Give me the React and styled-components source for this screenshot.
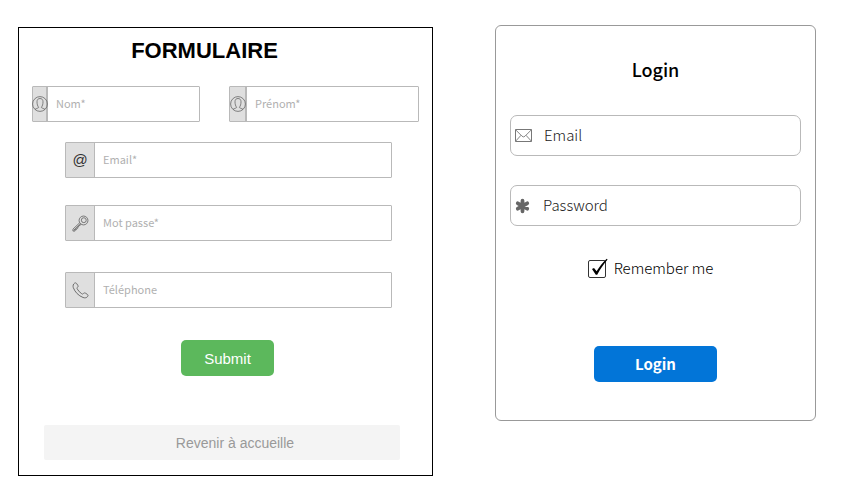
import React from "react";
import styled, { createGlobalStyle } from "styled-components";

const humanist = `"Noto Sans CJK SC", "Noto Sans", sans-serif`;
const grotesque = `"Liberation Sans", Arial, sans-serif`;

const GlobalStyle = createGlobalStyle`
  *, *::before, *::after { box-sizing: border-box; }
  body { margin: 0; background: #fff; color: #000; font-family: ${humanist}; }
  input, button { font: inherit; margin: 0; }
`;

const Page = styled.main`
  display: grid;
  grid-template-columns: 415fr 321fr;
  align-items: start;
  gap: 62px;
  padding: 25px 33px 19px 18px;
`;

const RegisterPanel = styled.form`
  display: flex;
  flex-direction: column;
  min-width: 0;
  margin-top: 2px;
  padding-bottom: 15px;
  border: 1px solid #000;
`;

const RegisterTitle = styled.h1`
  margin: 10px 42px 0 0;
  font: bold 22px/26px ${grotesque};
  text-align: center;
`;

const NameRow = styled.div`
  display: grid;
  grid-template-columns: 168fr 190fr;
  gap: 29px;
  padding: 0 13px;
  margin: 22px 0 20px;
`;

const FieldList = styled.div`
  display: flex;
  flex-direction: column;
  gap: 27px;
  padding: 0 40px 0 46px;

  > :last-child { margin-top: 4px; }
`;

const Field = styled.label`
  display: flex;
  min-width: 0;
  height: 36px;
  border: 1px solid #b9b9b9;
  border-radius: 1px;
`;

const Addon = styled.span`
  display: flex;
  flex: none;
  align-items: center;
  justify-content: center;
  width: ${({ $width }) => $width}px;
  background: #dfdfdf;
  border-right: ${({ $edge }) => $edge || 1}px solid #b9b9b9;
  color: #333;
  font: 15px/34px ${grotesque};

  svg { flex: none; }
`;

const FieldInput = styled.input`
  flex: 1;
  min-width: 0;
  padding: 0 8px 2px;
  border: 0;
  background: #fff;
  font-size: 11px;
  &::placeholder { color: #b0b0b0; opacity: 1; }
`;

const SubmitButton = styled.button`
  align-self: center;
  width: 93px;
  height: 36px;
  margin: 32px 0 49px 4px;
  padding: 2px 0 0;
  border: 0;
  border-radius: 5px;
  background: #5cb85c;
  color: #fff;
  font: 15px/34px ${grotesque};
`;

const BackButton = styled.button`
  height: 35px;
  margin: 0 32px 0 25px;
  padding: 1px 0 0 26px;
  border: 0;
  border-radius: 2px;
  background: #f4f4f4;
  color: #999;
  font: 14px/34px ${grotesque};
`;

const LoginPanel = styled.form`
  display: flex;
  flex-direction: column;
  min-width: 0;
  padding: 28px 14px 38px;
  border: 1px solid #999;
  border-radius: 6px;
`;

const LoginTitle = styled.h2`
  margin: 0 0 31px;
  font-size: 18px;
  font-weight: 500;
  line-height: 30px;
  text-align: center;
`;

const LoginField = styled.label`
  display: flex;
  align-items: center;
  height: 41px;
  margin-bottom: 29px;
  padding-left: 4px;
  border: 1px solid #b9b9b9;
  border-radius: 7px;
  color: #666;

  svg { flex: none; }
`;

const LoginInput = styled.input`
  flex: 1;
  min-width: 0;
  height: 100%;
  padding: 0 12px 2px;
  border: 0;
  background: transparent;
  font-size: 15px;
  font-weight: 300;
  &::placeholder { color: #222; opacity: 1; }
`;

const Remember = styled.label`
  display: flex;
  align-items: center;
  align-self: center;
  gap: 8px;
  height: 24px;
  margin: 2px 10px 65px 0;
  color: #000;
  font-size: 15px;
  font-weight: 300;
  line-height: 22px;
`;

const RememberText = styled.span`
  padding-bottom: 2px;
`;

const CheckWrap = styled.span`
  position: relative;
  display: block;
  width: 18px;
  height: 18px;

  svg {
    position: absolute;
    left: 0;
    bottom: 0;
    pointer-events: none;
  }
  input:not(:checked) + svg { display: none; }
`;

const CheckInput = styled.input`
  display: block;
  appearance: none;
  width: 18px;
  height: 18px;
  border: 1px solid #333;
  border-radius: 2px;
`;

const LoginButton = styled.button`
  align-self: center;
  width: 123px;
  height: 36px;
  padding: 0 0 1px;
  border: 0;
  border-radius: 5px;
  background: #0275d8;
  color: #fff;
  font-size: 15px;
  font-weight: 700;
  line-height: 34px;
`;

const PersonIcon = () => (
  <svg width="16" height="16" viewBox="0 0 16 16" fill="none" stroke="#666" strokeWidth="0.8" aria-hidden="true">
    <circle cx="8" cy="8" r="7.4" />
    <path d="M3.6 13.6V12.8C4.6 12.3 6.6 12.3 6.6 11.2C5.6 10.2 5 8 5 5.8C5 3.7 6.1 2.5 8 2.5S11 3.7 11 5.8C11 8 10.4 10.2 9.4 11.2C9.4 12.3 11.4 12.3 12.4 12.8V13.6" />
  </svg>
);

const KeyIcon = () => (
  <svg width="17" height="17" viewBox="0 0 18 18" fill="none" stroke="#666" strokeWidth="0.9" aria-hidden="true">
    <circle cx="12.2" cy="5.8" r="4.7" />
    <circle cx="12.5" cy="5.5" r="2.6" />
    <path d="M8.2 8.2L1 15V17H3.2V15.5H4.8L5 14.2L6.3 13.9L6.2 12.6L9.8 9.8M2 16L9 9.3" />
  </svg>
);

const PhoneIcon = () => (
  <svg width="17" height="17" viewBox="0 0 18 18" fill="none" stroke="#666" strokeWidth="1" strokeLinejoin="round" aria-hidden="true">
    <path d="M2.8 1.2C3.6.7 4.4.9 5 1.8L6.2 3.6C6.8 4.6 6.4 5.2 5.7 5.7C5.1 6.2 5.2 6.7 5.7 7.6C6.8 9.5 8.4 11.2 10.3 12.4C11.1 12.9 11.5 12.9 12 12.3C12.6 11.6 13.3 11.3 14.2 11.8L16.1 13C17.1 13.6 17.2 14.5 16.6 15.3C15.6 16.8 13.6 17.1 11.7 16.4C6.9 14.5 3.1 10.7 1.4 6C.8 4 1.2 2.2 2.8 1.2Z" />
  </svg>
);

const MailIcon = () => (
  <svg width="17" height="13" viewBox="0 0 17 13" fill="none" stroke="#777" aria-hidden="true">
    <path d="M.5.5H16.5V12.5H.5Z" />
    <path strokeWidth="0.9" d="M.5.7L7 7.2Q8.5 8.6 10 7.2L16.5.7M.5 12.3L6 6.3M16.5 12.3L11 6.3" />
  </svg>
);

const AsteriskIcon = () => (
  <svg width="16" height="16" viewBox="0 0 16 16" stroke="#666" strokeWidth="3.8" strokeLinecap="round" aria-hidden="true">
    <path d="M7.5 2.7V13.3M2.8 5.3L12.2 10.7M12.2 5.3L2.8 10.7" />
  </svg>
);

const CheckMark = () => (
  <svg width="21" height="20" viewBox="0 0 21 20" fill="#000" aria-hidden="true">
    <path d="M4 11L6 10L8.6 13.2C11.5 8.7 14.5 4.7 18.7.7L19.6 1.4C15.7 6 12.3 10.8 9.2 16.8H7.8Z" />
  </svg>
);

function IconField({ icon, width, edge, label, ...input }) {
  return (
    <Field>
      <Addon $width={width} $edge={edge}>{icon}</Addon>
      <FieldInput placeholder={label} aria-label={label} {...input} />
    </Field>
  );
}

export default function App() {
  const stay = (event) => event.preventDefault();
  return (
    <>
      <GlobalStyle />
      <Page>
        <RegisterPanel onSubmit={stay}>
          <RegisterTitle>FORMULAIRE</RegisterTitle>
          <NameRow>
            <IconField icon={<PersonIcon />} width={15} edge={2} label="Nom*" />
            <IconField icon={<PersonIcon />} width={17} edge={2} label="Prénom*" />
          </NameRow>
          <FieldList>
            <IconField icon="@" width={29} label="Email*" type="email" />
            <IconField icon={<KeyIcon />} width={29} label="Mot passe*" type="password" />
            <IconField icon={<PhoneIcon />} width={29} label="Téléphone" type="tel" />
          </FieldList>
          <SubmitButton type="submit">Submit</SubmitButton>
          <BackButton type="button">Revenir à accueille</BackButton>
        </RegisterPanel>

        <LoginPanel onSubmit={stay}>
          <LoginTitle>Login</LoginTitle>
          <LoginField>
            <MailIcon />
            <LoginInput type="email" placeholder="Email" aria-label="Email" />
          </LoginField>
          <LoginField>
            <AsteriskIcon />
            <LoginInput type="password" placeholder="Password" aria-label="Password" />
          </LoginField>
          <Remember>
            <CheckWrap>
              <CheckInput type="checkbox" defaultChecked />
              <CheckMark />
            </CheckWrap>
            <RememberText>Remember me</RememberText>
          </Remember>
          <LoginButton type="submit">Login</LoginButton>
        </LoginPanel>
      </Page>
    </>
  );
}
